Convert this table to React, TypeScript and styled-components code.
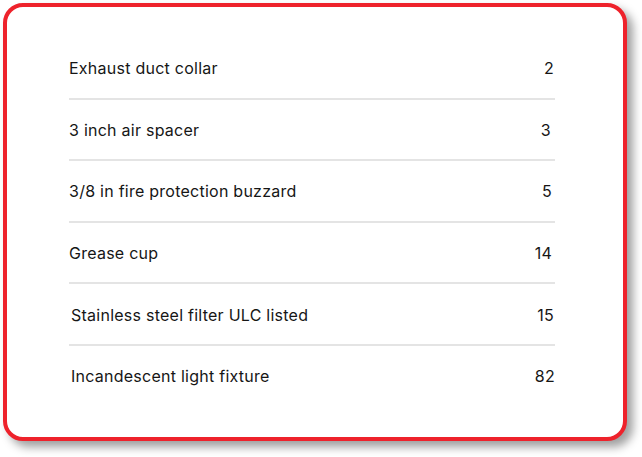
import React from "react";
import styled, { createGlobalStyle } from "styled-components";

const GlobalStyle = createGlobalStyle`
  html, body {
    margin: 0;
    padding: 0;
    background: #ffffff;
  }
  body {
    font-family: Inter, "Liberation Sans", Arial, sans-serif;
  }
`;

const Page = styled.div`
  padding: 3px 0 0 3px;
  width: 642px;
  height: 457px;
  box-sizing: border-box;
`;

const Card = styled.div`
  width: 624px;
  height: 438px;
  box-sizing: border-box;
  border: 4px solid #ee222b;
  border-radius: 20px;
  background: #ffffff;
  box-shadow: 6px 6px 10px rgba(0, 0, 0, 0.38);
  padding: 31px 68px 0 62px;
`;

const List = styled.ul`
  list-style: none;
  margin: 0;
  padding: 0;
  display: flex;
  flex-direction: column;
`;

const Row = styled.li<{ $last?: boolean }>`
  display: flex;
  justify-content: space-between;
  align-items: center;
  height: 61.6px;
  padding-top: 1px;
  box-sizing: border-box;
  border-bottom: 2px solid ${(p) => (p.$last ? "transparent" : "#e4e4e4")};
  font-size: 16px;
  line-height: 20px;
  letter-spacing: 0.25px;
  color: #161616;
`;

const Label = styled.span<{ $indent: number }>`
  padding-left: ${(p) => p.$indent}px;
`;

const Value = styled.span<{ $inset: number }>`
  padding-right: ${(p) => p.$inset}px;
`;

const items = [
  { label: "Exhaust duct collar", value: "2", indent: 0, inset: 1 },
  { label: "3 inch air spacer", value: "3", indent: 0, inset: 4 },
  { label: "3/8 in fire protection buzzard", value: "5", indent: 0, inset: 3 },
  { label: "Grease cup", value: "14", indent: 0, inset: 3 },
  { label: "Stainless steel filter ULC listed", value: "15", indent: 2, inset: 1 },
  { label: "Incandescent light fixture", value: "82", indent: 2, inset: 0 },
];

export default function App() {
  return (
    <>
      <GlobalStyle />
      <Page>
        <Card>
          <List>
            {items.map((it, i) => (
              <Row key={it.label} $last={i === items.length - 1}>
                <Label $indent={it.indent}>{it.label}</Label>
                <Value $inset={it.inset}>{it.value}</Value>
              </Row>
            ))}
          </List>
        </Card>
      </Page>
    </>
  );
}
